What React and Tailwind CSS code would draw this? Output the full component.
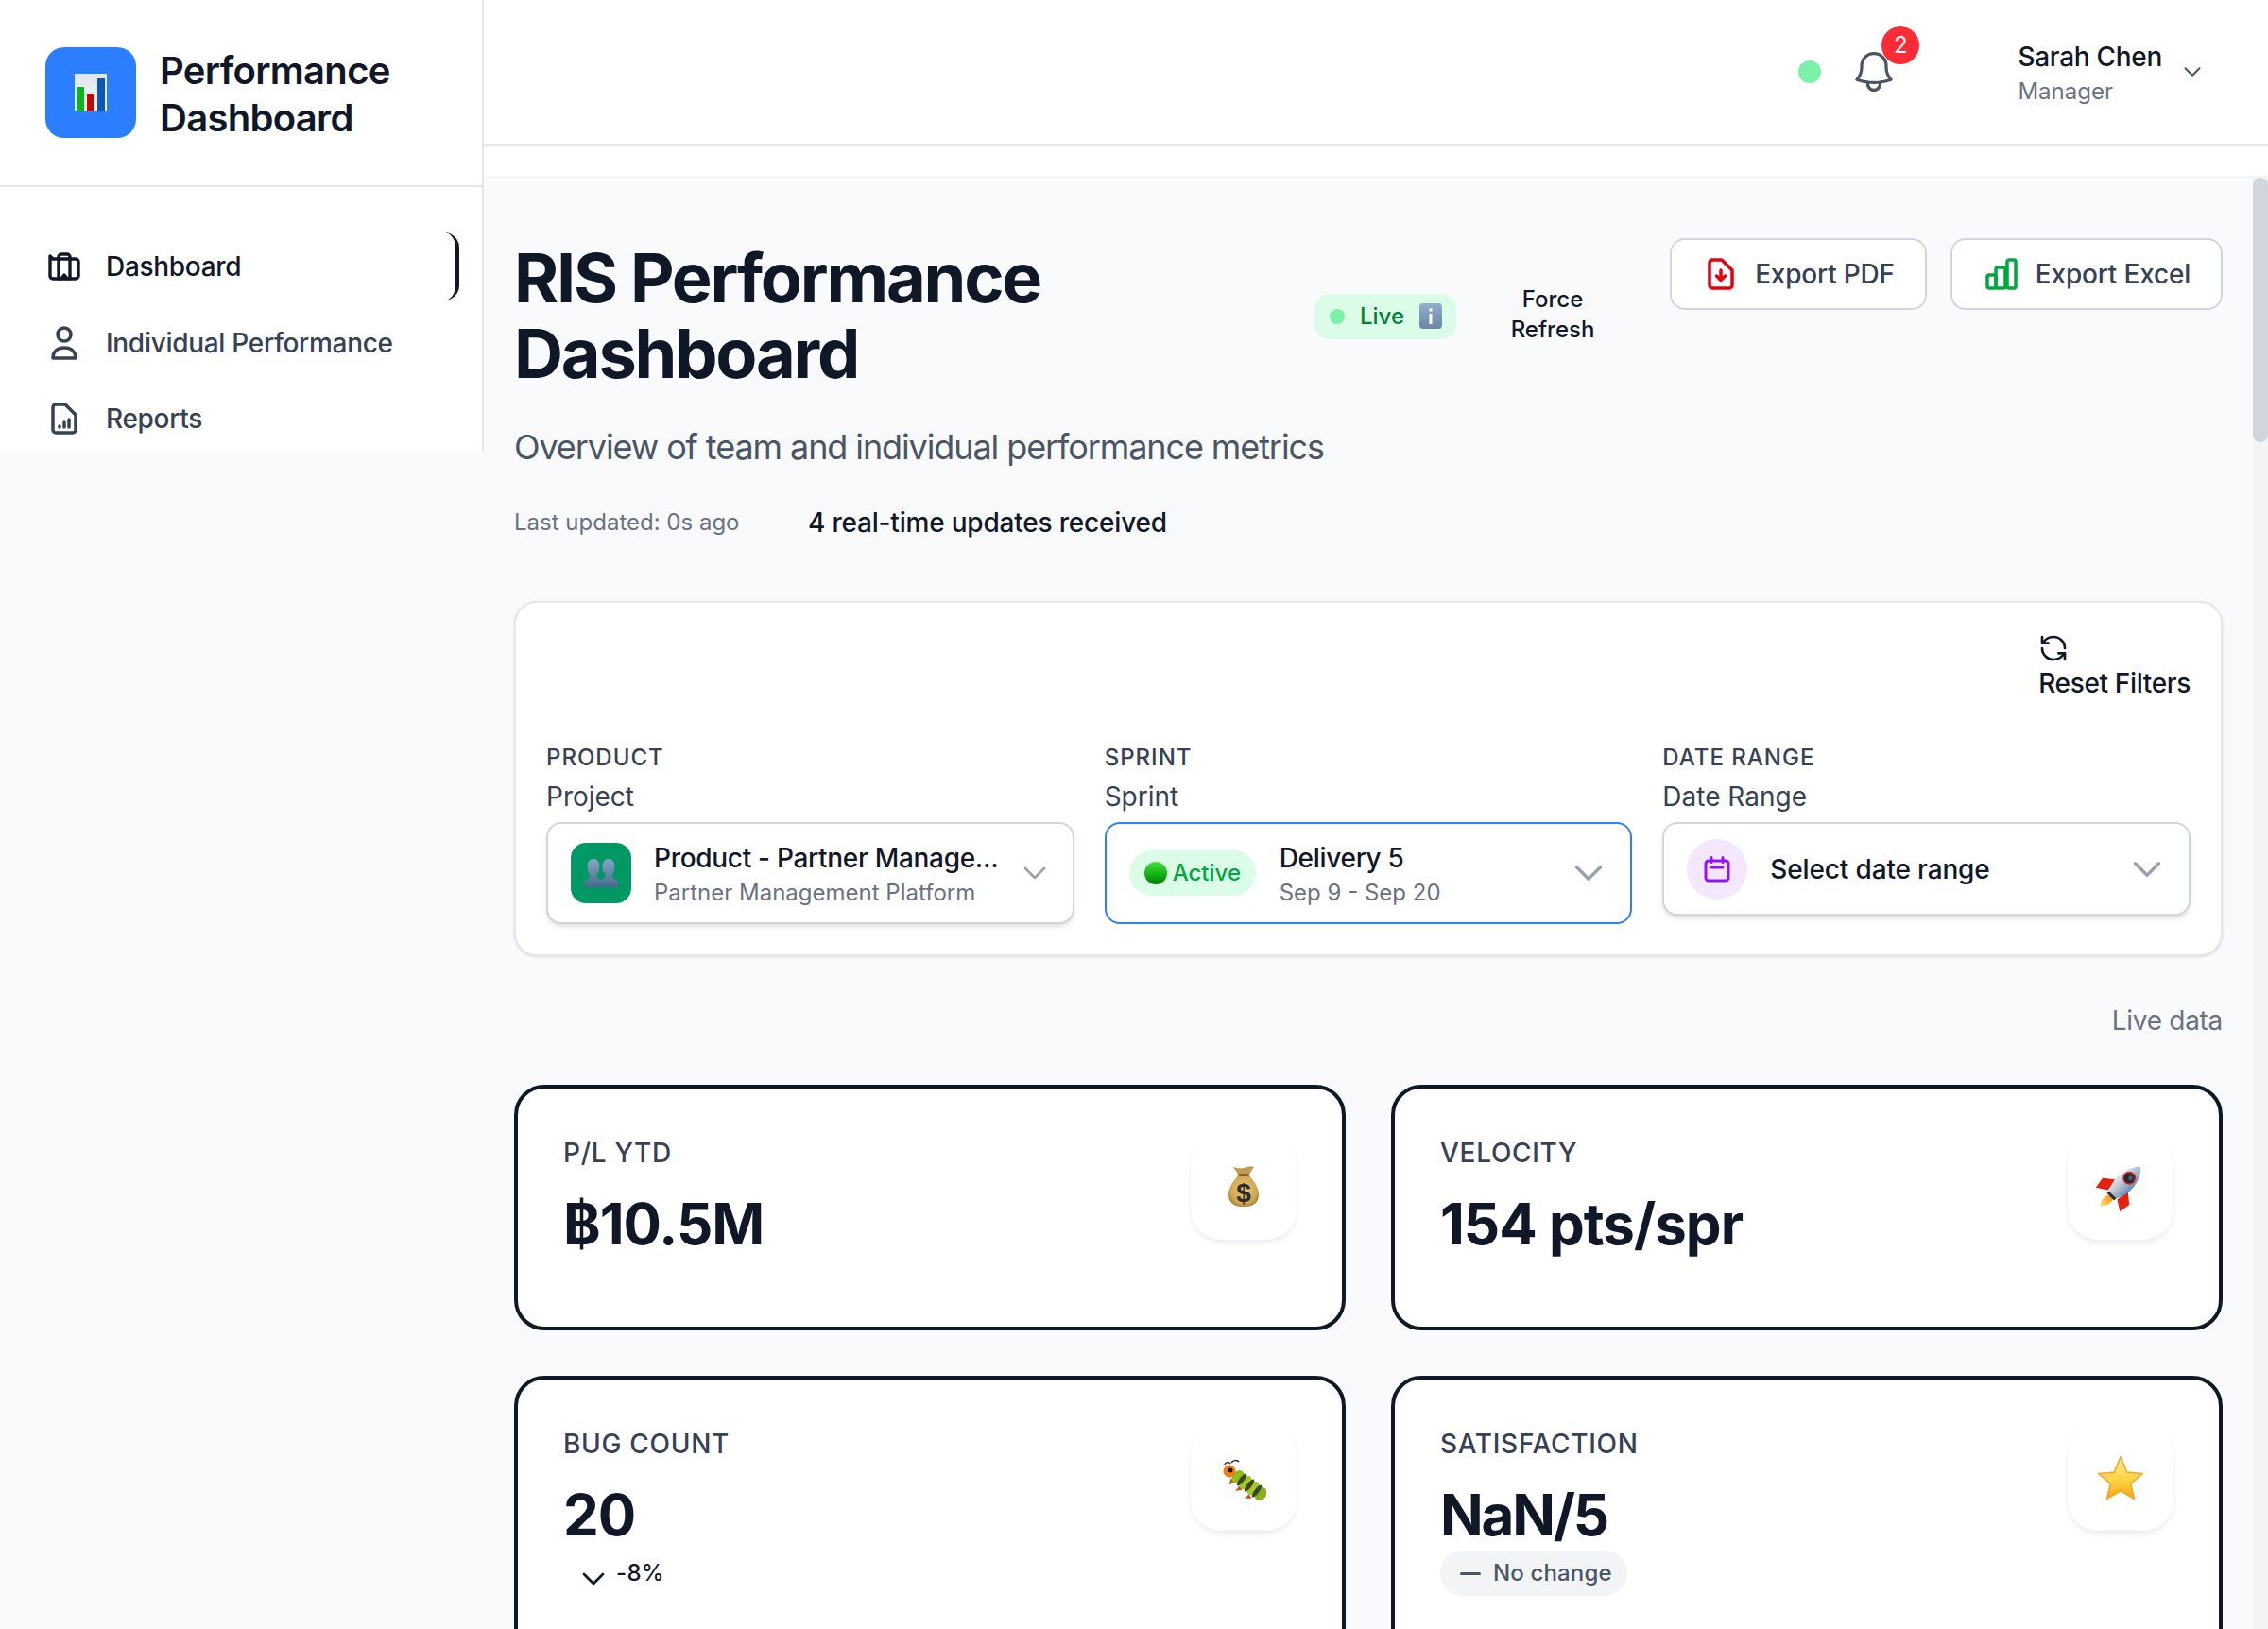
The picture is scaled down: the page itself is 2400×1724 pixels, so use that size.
import { RefreshCcw } from "lucide-react";

const Chevron = ({ className }) => (
  <svg viewBox="0 0 24 24" fill="none" stroke="currentColor" strokeWidth="2" strokeLinecap="round" strokeLinejoin="round" className={className}>
    <path d="m19.5 8.25-7.5 7.5-7.5-7.5" />
  </svg>
);

const ChartEmoji = () => (
  <svg viewBox="0 0 34 40" className="w-[34px] h-[40px]">
    <defs>
      <linearGradient id="chartBg" x1="0" y1="0" x2="0" y2="1">
        <stop offset="0" stopColor="#dfe6ee" />
        <stop offset="1" stopColor="#f6f7f8" />
      </linearGradient>
    </defs>
    <rect width="34" height="40" fill="url(#chartBg)" />
    <rect x="2" y="14" width="8" height="26" fill="#0bb51b" />
    <rect x="13" y="21" width="8" height="19" fill="#bf0a0a" />
    <rect x="24" y="5" width="8" height="35" fill="#0a58b8" />
  </svg>
);

const DashboardIcon = () => (
  <svg viewBox="0 0 34 30" fill="none" stroke="currentColor" strokeWidth="3.4" strokeLinecap="round" strokeLinejoin="round" className="w-[34px] h-[30px]">
    <path d="M2 4l3 3h24a3 3 0 0 1 3 3v15a3 3 0 0 1-3 3H5a3 3 0 0 1-3-3z" />
    <path d="M11 28V5a3 3 0 0 1 3-3h6a3 3 0 0 1 3 3v23" />
    <path d="M14 28l3-4 3 4" />
  </svg>
);

const PersonIcon = () => (
  <svg viewBox="0 0 28 36" fill="none" stroke="currentColor" strokeWidth="3.5" strokeLinecap="round" strokeLinejoin="round" className="w-[28px] h-[36px]">
    <circle cx="14" cy="9" r="7" />
    <path d="M2 34c0-7 5-11 12-11s12 4 12 11z" />
  </svg>
);

const ReportIcon = () => (
  <svg viewBox="0 0 28 34" fill="none" stroke="currentColor" strokeWidth="3.5" strokeLinecap="round" strokeLinejoin="round" className="w-[28px] h-[34px]">
    <path d="M5 2h10l11 11v16a3 3 0 0 1-3 3H5a3 3 0 0 1-3-3V5a3 3 0 0 1 3-3z" />
    <path d="M9 26v-1M14 26v-5M19 26v-8" />
  </svg>
);

const PdfIcon = () => (
  <svg viewBox="0 0 28 34" fill="none" stroke="currentColor" strokeWidth="3.5" strokeLinecap="round" strokeLinejoin="round" className="w-[28px] h-[34px] text-red-600">
    <path d="M5 2h10l11 11v16a3 3 0 0 1-3 3H5a3 3 0 0 1-3-3V5a3 3 0 0 1 3-3z" />
    <path d="M14 13v10M9.500 19l4.500 4.500 4.500-4.500" />
  </svg>
);

const ExcelIcon = () => (
  <svg viewBox="0 0 34 34" fill="none" stroke="currentColor" strokeWidth="3.5" strokeLinecap="round" strokeLinejoin="round" className="w-[34px] h-[34px] text-green-600">
    <rect x="2" y="18" width="9" height="14" rx="2" />
    <rect x="11" y="10" width="10" height="22" rx="2" />
    <rect x="23" y="2" width="9" height="30" rx="2" />
  </svg>
);

const InfoEmoji = () => (
  <svg viewBox="0 0 24 27" className="w-[24px] h-[27px]">
    <defs>
      <linearGradient id="infoBg" x1="0" y1="0" x2="0" y2="1">
        <stop offset="0" stopColor="#8fb0cc" />
        <stop offset="1" stopColor="#6c86a6" />
      </linearGradient>
    </defs>
    <rect width="24" height="27" rx="4" fill="url(#infoBg)" />
    <circle cx="12" cy="7" r="1.800" fill="#fff" />
    <rect x="10.500" y="11" width="3" height="11" fill="#fff" />
  </svg>
);

const BustsEmoji = () => (
  <svg viewBox="0 0 36 30" className="w-[36px] h-[30px]">
    <defs>
      <linearGradient id="bust" x1="0" y1="0" x2="0" y2="1">
        <stop offset="0" stopColor="#86a6c8" />
        <stop offset="1" stopColor="#476a90" />
      </linearGradient>
    </defs>
    <path d="M10 0c4 0 6.500 3 6.500 8 0 4-1.500 7-3 9v2l7 5v6H0v-6l6.500-5v-2C5 15 3.500 12 3.500 8 3.500 3 6 0 10 0z" fill="url(#bust)" />
    <path d="M26 0c4 0 6.500 3 6.500 8 0 4-1.500 7-3 9v2l6.500 5v6H16v-6l6.500-5v-2C21 15 19.500 12 19.500 8 19.500 3 22 0 26 0z" fill="url(#bust)" />
  </svg>
);

const GreenBall = () => (
  <svg viewBox="0 0 24 24" className="w-[24px] h-[24px]">
    <defs>
      <linearGradient id="ball" x1="0" y1="0" x2="0" y2="1">
        <stop offset="0" stopColor="#4ade40" />
        <stop offset="0.6" stopColor="#0fae12" />
        <stop offset="1" stopColor="#067a0a" />
      </linearGradient>
    </defs>
    <circle cx="12" cy="12" r="12" fill="url(#ball)" />
  </svg>
);

const MoneyBag = () => (
  <svg viewBox="0 0 48 48" className="w-12 h-12">
    <defs>
      <radialGradient id="bag" cx="0.5" cy="0.45" r="0.65">
        <stop offset="0" stopColor="#e8c878" />
        <stop offset="0.7" stopColor="#cfa552" />
        <stop offset="1" stopColor="#94692a" />
      </radialGradient>
    </defs>
    <path d="M13 3c4 1 8 2 11 1s7-2 11-1l-6 9h-10z" fill="#c39a4e" />
    <path d="M19 11c-5 6-11 13-11 21 0 10 7 13 16 13s16-3 16-13c0-8-6-15-11-21z" fill="url(#bag)" />
    <rect x="18" y="10" width="12" height="3" rx="1.500" fill="#8a6526" />
    <text x="24" y="40" textAnchor="middle" fontSize="28" fontWeight="700" fill="#2f2b2a" fontFamily="Liberation Sans, sans-serif">$</text>
  </svg>
);

const Rocket = () => (
  <svg viewBox="0 0 48 48" className="w-12 h-12 overflow-visible">
    <defs>
      <linearGradient id="hull" x1="0" y1="0" x2="1" y2="0">
        <stop offset="0" stopColor="#e5eaee" />
        <stop offset="0.55" stopColor="#a9b9c6" />
        <stop offset="1" stopColor="#5b8fc0" />
      </linearGradient>
      <linearGradient id="flame" x1="0" y1="0" x2="0" y2="1">
        <stop offset="0" stopColor="#ff8a00" />
        <stop offset="1" stopColor="#ffe27a" />
      </linearGradient>
    </defs>
    <g transform="rotate(45 24 24)">
      <path d="M24 36c-5 4-6 10-1 18 6-6 7-12 3-18z" fill="url(#flame)" />
      <path d="M15 22L4 31l2 12 11-7z" fill="#e8200c" />
      <path d="M33 22l11 9-2 12-11-7z" fill="#e8200c" />
      <path d="M24-6c7 6 11 17 10 28-1 6-3 11-5 15H19c-2-4-4-9-5-15-1-11 3-22 10-28z" fill="url(#hull)" />
      <rect x="18.500" y="36" width="11" height="3" fill="#25303a" />
      <circle cx="24" cy="11" r="7" fill="#e0241b" />
      <circle cx="24" cy="11" r="5.500" fill="#1f2a36" />
      <circle cx="25" cy="10" r="2.500" fill="#46586b" />
    </g>
  </svg>
);

const Caterpillar = () => (
  <svg viewBox="0 0 48 48" className="w-12 h-12">
    <path d="M4 10c1-3 4-3 6-1M11 8c2-3 6-3 8-1" fill="none" stroke="#1f1f1f" strokeWidth="1.500" />
    <path d="M11 25l-1 5 4-2M20 33l-3 4 5-1M30 42l-3 3 5 0" fill="#c8501a" stroke="#c8501a" strokeWidth="1.500" />
    <g transform="translate(30 32) rotate(-53)">
      <ellipse cy="-15" rx="7.500" ry="6" fill="#8fbc1e" />
      <ellipse cy="-5" rx="8" ry="6" fill="#a0c928" />
      <ellipse cy="5" rx="8" ry="6" fill="#a0c928" />
      <ellipse cy="15" rx="7.500" ry="6" fill="#86b31c" />
      <ellipse cy="-10" rx="8" ry="2.500" fill="#3d4420" />
      <ellipse cy="0" rx="8" ry="2.500" fill="#3d4420" />
      <ellipse cy="10" rx="8" ry="2.500" fill="#3d4420" />
    </g>
    <circle cx="9" cy="17" r="6.500" fill="#ee7d12" />
    <circle cx="10" cy="16" r="2.500" fill="#1a1a1a" />
  </svg>
);

const Star = () => (
  <svg viewBox="2.500 3 43 41.500" className="w-12 h-12">
    <defs>
      <linearGradient id="star" x1="0" y1="0" x2="0" y2="1">
        <stop offset="0" stopColor="#ffec8c" />
        <stop offset="0.6" stopColor="#ffd23c" />
        <stop offset="1" stopColor="#f59e0b" />
      </linearGradient>
    </defs>
    <path d="M24 4l6 14.500 15 1.200-11.500 9.800 3.600 14.500L24 36l-13.100 8 3.600-14.500L3 19.700l15-1.200z" fill="url(#star)" stroke="#f0a830" strokeWidth="1.500" strokeLinejoin="round" />
  </svg>
);

const Select = ({ label, title, children }) => (
  <div>
    <div className="mt-[1px] text-[24px] leading-[32px] font-medium tracking-[1px] text-gray-700 mb-[5px]">{label}</div>
    <div className="text-[28px] leading-[40px] text-gray-700 mb-[7px]">{title}</div>
    {children}
  </div>
);

const Kpi = ({ label, value, icon, height, children }) => (
  <div className={`${height} bg-white border-4 border-gray-900 rounded-[32px] p-12 flex justify-between items-start`}>
    <div>
      <div className="text-[28px] leading-[40px] font-medium tracking-[0.7px] text-gray-700">{label}</div>
      <div className="text-[60px] leading-[72px] font-bold tracking-[-1px] text-gray-900 mt-[19px]">{value}</div>
      <div className="mt-[2px]">{children}</div>
    </div>
    <div className="w-[112px] h-[112px] bg-white rounded-[32px] shadow-md shadow-gray-200/70 flex items-center justify-center">{icon}</div>
  </div>
);

export default function App() {
  return (
    <div className="flex w-[2400px] h-[1724px] overflow-hidden bg-gray-50 font-[Inter,sans-serif]">
      <aside className="w-[512px] h-[478px] shrink-0 bg-white border-r-2 border-gray-200 overflow-hidden">
        <div className="h-[198px] border-b-2 border-gray-200 flex items-center gap-[25px] pl-12">
          <div className="w-[96px] h-[96px] rounded-[20px] bg-blue-500 flex items-center justify-center">
            <ChartEmoji />
          </div>
          <div className="translate-y-[2px] text-[40px] leading-[50px] tracking-[-0.7px] font-semibold text-gray-900">Performance<br />Dashboard</div>
        </div>
        <nav className="px-6 pt-12 flex flex-col gap-2">
          <div className="h-[72px] pl-6 flex items-center gap-6 text-[28px] tracking-[-0.3px] font-medium text-gray-900 border-r-4 border-gray-900 rounded-2xl">
            <span className="w-[40px] flex justify-center"><DashboardIcon /></span>Dashboard
          </div>
          <div className="h-[72px] pl-6 pt-[2px] flex items-center gap-6 text-[28px] tracking-[-0.3px] font-medium text-gray-700">
            <span className="w-[40px] flex justify-center"><PersonIcon /></span>Individual Performance
          </div>
          <div className="h-[72px] pl-6 pt-[2px] flex items-center gap-6 text-[28px] tracking-[-0.3px] font-medium text-gray-700">
            <span className="w-[40px] flex justify-center"><ReportIcon /></span>Reports
          </div>
        </nav>
      </aside>

      <div className="flex-1 min-w-0 flex flex-col">
        <header className="h-[154px] shrink-0 bg-white border-b-2 border-gray-200 flex items-center justify-end pr-[68px]">
          <span className="w-6 h-6 rounded-full bg-green-300" />
          <div className="relative ml-[30px] w-[52px] h-[52px] text-gray-600">
            <svg viewBox="0 0 24 24" fill="none" stroke="currentColor" strokeWidth="1.500" strokeLinecap="round" strokeLinejoin="round" className="w-[52px] h-[52px]">
              <path d="M14.857 17.082a23.848 23.848 0 0 0 5.454-1.31A8.967 8.967 0 0 1 18 9.75V9A6 6 0 0 0 6 9v.75a8.967 8.967 0 0 1-2.312 6.022c1.733.64 3.56 1.085 5.455 1.31m5.714 0a24.255 24.255 0 0 1-5.714 0m5.714 0a3 3 0 1 1-5.714 0" />
            </svg>
            <span className="absolute top-[-22px] left-[34px] w-10 h-10 rounded-full bg-red-500 text-white text-[24px] leading-[40px] text-center">2</span>
          </div>
          <div className="ml-[126px]">
            <div className="text-[28px] leading-[40px] tracking-[-0.3px] font-medium text-gray-900">Sarah Chen</div>
            <div className="text-[24px] leading-[32px] text-gray-500 mt-[1px]">Manager</div>
          </div>
          <Chevron className="w-6 h-6 ml-[20px] text-gray-600" />
        </header>
        <div className="h-[34px] shrink-0 bg-white border-b-2 border-gray-100" />

        <div className="flex-1 min-h-0 flex">
          <main className="flex-1 min-w-0 pl-8 pr-8 pt-[64px] overflow-hidden">
            <div className="flex items-start">
              <div className="flex items-center">
                <h1 className="w-[823px] mr-[24px] mt-[2px] text-[72px] leading-[80px] tracking-[-2.2px] font-bold text-gray-900">RIS Performance<br />Dashboard</h1>
                <div className="h-12 w-[150px] mt-[3px] rounded-2xl bg-green-100 flex items-center pl-4 text-[24px] font-medium text-green-700">
                  <span className="w-4 h-4 rounded-full bg-green-300" />
                  <span className="ml-[16px]">Live</span>
                  <span className="ml-[16px] flex"><InfoEmoji /></span>
                </div>
                <div className="ml-[50px] w-[104px] text-center text-[24px] leading-[32px] font-medium text-gray-900">Force Refresh</div>
              </div>
              <div className="ml-auto flex gap-[25px]">
                <div className="h-[76px] px-8 bg-white border-2 border-gray-300 rounded-2xl flex items-center gap-4 text-[28px] tracking-[-0.2px] font-medium text-gray-700">
                  <span className="w-[40px] flex justify-center"><PdfIcon /></span>Export PDF
                </div>
                <div className="h-[76px] px-8 bg-white border-2 border-gray-300 rounded-2xl flex items-center gap-4 text-[28px] tracking-[-0.2px] font-medium text-gray-700">
                  <span className="w-[40px] flex justify-center"><ExcelIcon /></span>Export Excel
                </div>
              </div>
            </div>

            <p className="mt-[31px] text-[36px] leading-[56px] tracking-[-1.1px] text-gray-600">Overview of team and individual performance metrics</p>
            <div className="mt-[32px] h-[40px] flex items-center">
              <span className="w-[311px] text-[24px] text-gray-500">Last updated: 0s ago</span>
              <span className="text-[28px] tracking-[-0.2px] font-medium text-gray-900">4 real-time updates received</span>
            </div>

            <section className="mt-[63px] bg-white border-2 border-gray-200 rounded-3xl shadow-sm p-8">
              <div className="flex justify-end">
                <div className="flex flex-col items-start text-[28px] tracking-[-0.35px] font-medium text-gray-900">
                  <RefreshCcw size={32} strokeWidth={2} className="text-gray-900" />
                  <span className="leading-[40px] pt-[1px]">Reset Filters</span>
                </div>
              </div>
              <div className="mt-[42px] grid grid-cols-3 gap-8 items-start">
                <Select label="PRODUCT" title="Project">
                  <div className="h-[108px] bg-white border-2 border-gray-300 rounded-2xl shadow-md pl-6 pr-6 flex items-center">
                    <span className="w-16 h-16 rounded-2xl bg-emerald-600 flex items-center justify-center shrink-0"><BustsEmoji /></span>
                    <div className="ml-[24px] flex-1 min-w-0 pt-[1px]">
                      <div className="text-[28px] leading-[40px] tracking-[-0.3px] font-medium text-gray-900 whitespace-nowrap">Product - Partner Manage...</div>
                      <div className="text-[24px] leading-[32px] text-gray-500 mt-[1px]">Partner Management Platform</div>
                    </div>
                    <Chevron className="w-8 h-8 text-gray-400 shrink-0" />
                  </div>
                </Select>
                <Select label="SPRINT" title="Sprint">
                  <div className="h-[108px] bg-white border-2 border-blue-500 rounded-2xl pl-6 pr-6 flex items-center">
                    <span className="h-12 w-[134px] rounded-3xl bg-green-100 flex items-center gap-[6px] pl-4 text-[24px] font-medium text-green-600"><GreenBall />Active</span>
                    <div className="ml-[25px] flex-1 min-w-0 pt-[1px]">
                      <div className="text-[28px] leading-[40px] tracking-[-0.3px] font-medium text-gray-900">Delivery 5</div>
                      <div className="text-[24px] leading-[32px] text-gray-500 mt-[1px]">Sep 9 - Sep 20</div>
                    </div>
                    <Chevron className="w-10 h-10 text-gray-400 shrink-0" />
                  </div>
                </Select>
                <Select label="DATE RANGE" title="Date Range">
                  <div className="h-[99px] bg-white border-2 border-gray-300 rounded-2xl shadow-md pl-6 pr-6 flex items-center">
                    <span className="w-16 h-16 rounded-full bg-purple-100 flex items-center justify-center shrink-0">
                      <svg viewBox="0 0 28 28" fill="none" stroke="currentColor" strokeWidth="3" strokeLinecap="round" className="w-7 h-7 text-purple-600">
                        <rect x="2" y="5" width="24" height="21" rx="3" />
                        <path d="M8 1.500v5M20 1.500v5M8 12h12" />
                      </svg>
                    </span>
                    <span className="ml-[24px] flex-1 text-[28px] tracking-[-0.15px] font-medium text-gray-900">Select date range</span>
                    <Chevron className="w-10 h-10 text-gray-400 shrink-0" />
                  </div>
                </Select>
              </div>
            </section>

            <div className="mt-[48px] text-right text-[28px] leading-[40px] tracking-[-0.3px] text-gray-500">Live data</div>

            <div className="mt-[48px] grid grid-cols-2 gap-12">
              <Kpi label="P/L YTD" value="฿10.5M" height="h-[260px]" icon={<MoneyBag />} />
              <Kpi label="VELOCITY" value="154 pts/spr" height="h-[260px]" icon={<Rocket />} />
              <Kpi label="BUG COUNT" value="20" height="h-[320px]" icon={<Caterpillar />}>
                <div className="h-12 px-4 flex items-center gap-2 text-[24px] tracking-[0.3px] font-medium text-gray-900">
                  <Chevron className="w-8 h-8 translate-y-[6px]" />-8%
                </div>
              </Kpi>
              <Kpi label="SATISFACTION" value={<span className="tracking-[-2.2px]">NaN/5</span>} height="h-[320px]" icon={<Star />}>
                <div className="h-12 inline-flex px-4 rounded-3xl bg-gray-100 items-center gap-2 text-[24px] tracking-[0.15px] font-medium text-gray-600">
                  <span className="w-8 flex justify-center"><span className="block w-[22px] h-[3px] rounded-full bg-gray-600" /></span>No change
                </div>
              </Kpi>
            </div>
          </main>
          <div className="w-4 shrink-0 bg-gray-100">
            <div className="h-[280px] bg-gray-300 rounded-lg" />
          </div>
        </div>
      </div>
    </div>
  );
}
